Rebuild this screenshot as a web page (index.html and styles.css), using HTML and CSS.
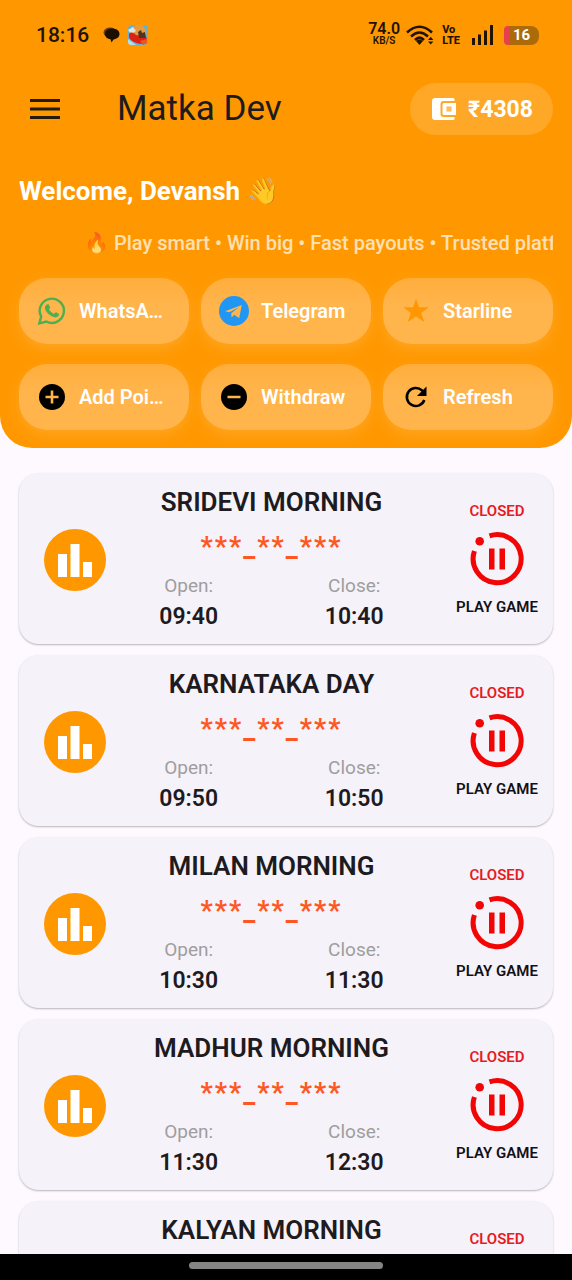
FILE: index.html
```html
<!DOCTYPE html>
<html lang="en">
<head>
<meta charset="utf-8">
<meta name="viewport" content="width=device-width, initial-scale=1">
<title>Matka Dev</title>
<link rel="stylesheet" href="styles.css">
</head>
<body>
<svg class="defs" aria-hidden="true">
  <symbol id="chart" viewBox="0 0 62 62"><path fill="#fff" d="M14 25h9v23h-9zM26.500 15h9v33h-9zM39 33h9v15h-9z"/></symbol>
  <symbol id="pause" viewBox="0 0 54 54"><path fill="none" stroke="#f20505" stroke-width="5" d="M19.500 3.900A24 24 0 1 1 4.400 19"/><circle cx="9.700" cy="9.300" r="4.300" fill="#f20505"/><path fill="#f20505" d="M19 16.500h5.500v21H19zM29.500 16.500H35v21h-5.500z"/></symbol>
</svg>
<div class="screen">
  <header class="header">
    <div class="status">
      <span class="clock">18:16</span>
      <svg class="ic-chat" viewBox="0 0 18 16" aria-hidden="true"><ellipse cx="7" cy="5.500" rx="6.500" ry="5" fill="#6b3c00"/><path d="M9 1.500c4.500 0 7.500 2.200 7.500 5.500 0 3-2.600 5-6 5.400L8.500 15.500 7.500 12.300C4.500 12 2 10 2 7c0-3.300 3-5.500 7-5.500z" fill="#1c0f00"/></svg>
      <svg class="ic-game" viewBox="0 0 20 20" aria-hidden="true"><rect width="20" height="20" rx="4" fill="#62b3cf"/><path d="M7 0h8l4 9-7 3-8-3z" fill="#e99a3c"/><path d="M0 5l5-3 3 4-5 3z" fill="#d9e8ea"/><path d="M1 9c2-3 5-1 7 1l10 2c2 2 0 6-4 7-5 0-12-3-13-7z" fill="#dc2214"/><path d="M10 7l3-2 1 3 3-1 1 6-7 0z" fill="#4d3524"/><path d="M12 16l7-2v4l-4 2z" fill="#f0551a"/><path d="M0 14l8 6H3q-3 0-3-3z" fill="#b8dce8"/></svg>
      <span class="spacer"></span>
      <span class="speed"><b>74.0</b><small>KB/S</small></span>
      <svg class="ic-wifi" viewBox="0 0 28 20" aria-hidden="true"><g fill="none" stroke="#211300" stroke-width="2.600"><path d="M1 7.500Q13.500-4 26 7.500"/><path d="M5 11.500Q13.500 3.500 22 11.500"/><path d="M9 15Q13.500 10.500 18 15"/></g><path fill="#211300" d="M10 16q3.500-3 7 0l-3.500 4zM22 15l2.700-3.300L27.400 15zM22 16.500h5.400l-2.700 3z"/></svg>
      <span class="volte"><b>Vo</b><b>LTE</b></span>
      <svg class="ic-signal" viewBox="0 0 22 20" aria-hidden="true"><path fill="#211300" d="M0 13h3v7H0zM6 9.500h3V20H6zM12 5.500h3V20h-3zM18 0h3v20h-3z"/></svg>
      <span class="battery">16</span>
    </div>
    <div class="appbar">
      <button class="menu" aria-label="Open menu"><svg viewBox="0 0 30 20" aria-hidden="true"><path stroke="#241a08" stroke-width="2.800" d="M0 1.500h30M0 10h30M0 18.500h30"/></svg></button>
      <h1 class="title">Matka Dev</h1>
      <button class="wallet"><svg viewBox="0 0 24 22" aria-hidden="true"><path fill="#fff" d="M3 0h18q1.500 0 1.500 1.500V3H11.500Q8.500 3 8.500 6v10q0 3 3 3h11v1.500Q22.500 22 21 22H3q-3 0-3-3V3Q0 0 3 0z"/><path fill="#fff" fill-rule="evenodd" d="M12 5h12v12H12q-1.500 0-1.500-1.500v-9Q10.500 5 12 5zm2.500 3.500v5h5v-5z"/><path fill="#fff" d="M14.500 8.500h5v5h-5z" opacity=".25"/></svg><span>₹4308</span></button>
    </div>
    <h2 class="welcome">Welcome, Devansh 👋</h2>
    <p class="ticker">🔥 Play smart • Win big • Fast payouts • Trusted platform</p>
    <nav class="actions">
      <button class="action"><svg viewBox="0 0 30 30" aria-hidden="true"><path fill="none" stroke="#4caf50" stroke-width="2.400" d="M2.300 27.300L4.200 20.600A12.100 12.100 0 1 1 9.200 25.500z"/><path fill="#4caf50" d="M11 8.300c.7 0 .9.300 1.100.8l1 2.300c.2.600-.8 1.400-1.200 1.900 1.300 2.300 2.800 3.600 5.200 4.700.6-.5 1.300-1.900 1.900-1.700l2.600 1.300c.6.400.3 1.800-.2 2.500-.9 1.100-2.700 1.600-4.200 1.200-4.200-1.200-6.800-3.800-8.700-7.200-1.300-2.500-.2-5.800 2.500-5.800z"/></svg><span>WhatsApp</span></button>
      <button class="action"><svg viewBox="0 0 30 30" aria-hidden="true"><circle cx="15" cy="15" r="15" fill="#2196f3"/><path fill="#ffb44c" d="M6 15.200L22.800 9l-2.600 13.300-5-3.500-2.600 2.600-.4-4.200 7.600-6-9.300 5z"/></svg><span>Telegram</span></button>
      <button class="action"><svg viewBox="0 0 30 30" aria-hidden="true"><path fill="#ff9800" d="M15 2.500l3 8.700h9.800l-7.600 5.700 3 9L15 20.500l-8.200 5.400 3-9-7.600-5.700H12z"/></svg><span>Starline</span></button>
      <button class="action"><svg viewBox="0 0 30 30" aria-hidden="true"><circle cx="15" cy="15" r="13"/><path stroke="#ffb44c" stroke-width="2.600" d="M8.500 15h13M15 8.500v13"/></svg><span>Add Points</span></button>
      <button class="action"><svg viewBox="0 0 30 30" aria-hidden="true"><circle cx="15" cy="15" r="13"/><path stroke="#ffb44c" stroke-width="2.600" d="M8.500 15h13"/></svg><span>Withdraw</span></button>
      <button class="action"><svg viewBox="0 0 30 30" aria-hidden="true"><path fill="none" stroke="#000" stroke-width="2.600" d="M23.300 18A9 9 0 1 1 21 8.400l2 2"/><path d="M25.500 4.500V14H16z"/></svg><span>Refresh</span></button>
    </nav>
  </header>
  <main class="games">
    <article class="card">
      <button class="chart" aria-label="Sridevi Morning chart"><svg aria-hidden="true"><use href="#chart"/></svg></button>
      <div class="info"><h3>SRIDEVI MORNING</h3><p class="result">***_**_***</p><dl><div><dt>Open:</dt><dd>09:40</dd></div><div><dt>Close:</dt><dd>10:40</dd></div></dl></div>
      <button class="play"><span class="closed">CLOSED</span><svg aria-hidden="true"><use href="#pause"/></svg><span>PLAY GAME</span></button>
    </article>
    <article class="card">
      <button class="chart" aria-label="Karnataka Day chart"><svg aria-hidden="true"><use href="#chart"/></svg></button>
      <div class="info"><h3>KARNATAKA DAY</h3><p class="result">***_**_***</p><dl><div><dt>Open:</dt><dd>09:50</dd></div><div><dt>Close:</dt><dd>10:50</dd></div></dl></div>
      <button class="play"><span class="closed">CLOSED</span><svg aria-hidden="true"><use href="#pause"/></svg><span>PLAY GAME</span></button>
    </article>
    <article class="card">
      <button class="chart" aria-label="Milan Morning chart"><svg aria-hidden="true"><use href="#chart"/></svg></button>
      <div class="info"><h3>MILAN MORNING</h3><p class="result">***_**_***</p><dl><div><dt>Open:</dt><dd>10:30</dd></div><div><dt>Close:</dt><dd>11:30</dd></div></dl></div>
      <button class="play"><span class="closed">CLOSED</span><svg aria-hidden="true"><use href="#pause"/></svg><span>PLAY GAME</span></button>
    </article>
    <article class="card">
      <button class="chart" aria-label="Madhur Morning chart"><svg aria-hidden="true"><use href="#chart"/></svg></button>
      <div class="info"><h3>MADHUR MORNING</h3><p class="result">***_**_***</p><dl><div><dt>Open:</dt><dd>11:30</dd></div><div><dt>Close:</dt><dd>12:30</dd></div></dl></div>
      <button class="play"><span class="closed">CLOSED</span><svg aria-hidden="true"><use href="#pause"/></svg><span>PLAY GAME</span></button>
    </article>
    <article class="card">
      <button class="chart" aria-label="Kalyan Morning chart"></button>
      <div class="info"><h3>KALYAN MORNING</h3></div>
      <button class="play"><span class="closed">CLOSED</span></button>
    </article>
  </main>
  <div class="navbar"><span class="handle"></span></div>
</div>
</body>
</html>
```

FILE: styles.css
```css
* { box-sizing: border-box; }
body, h1, h2, h3, p, dl, dd { margin: 0; }
body {
  background: #fef9ff;
  color: #1d1b20;
  font-family: Roboto, "Noto Sans", sans-serif;
}
button {
  padding: 0;
  border: 0;
  background: none;
  color: inherit;
  font: inherit;
  cursor: pointer;
}
svg { display: block; flex: none; }
.defs { position: absolute; width: 0; height: 0; }
.screen {
  display: flex;
  flex-direction: column;
  height: 100vh;
  overflow: hidden;
}

/* Header */
.header {
  flex: none;
  padding: 20px 19px 18px;
  border-radius: 0 0 32px 32px;
  background: #ff9800;
  overflow: hidden;
}
.status {
  display: flex;
  align-items: center;
  height: 30px;
  padding: 0 14px 0 17px;
  color: #211300;
}
.clock { margin-right: 14px; font-size: 21px; font-weight: 500; }
.ic-chat { width: 18px; height: 16px; margin-right: 7px; }
.ic-game { width: 20px; height: 20px; }
.spacer { flex: 1; }
.speed, .volte { display: flex; flex-direction: column; align-items: center; }
.speed { margin-right: 6px; }
.speed b { font-size: 16px; line-height: 12px; font-weight: 600; }
.speed small { font-size: 10px; line-height: 12px; font-weight: 600; }
.ic-wifi { width: 28px; height: 20px; margin-right: 8px; }
.volte { margin-right: 12px; align-items: flex-start; }
.volte b { font-size: 11px; line-height: 11px; font-weight: 800; }
.ic-signal { width: 22px; height: 20px; margin-right: 10px; }
.battery {
  width: 35px;
  border-radius: 4px 8px 8px 4px;
  background: linear-gradient(90deg, #e6404c 6px, #ad6a08 6px);
  color: #fff;
  font-size: 15px;
  line-height: 19px;
  font-weight: 700;
  text-align: center;
}
.appbar { display: flex; align-items: center; height: 52px; margin-top: 33px; }
.menu { padding: 11px; margin-right: 46px; }
.menu svg { width: 30px; height: 20px; }
.title { flex: 1; font-size: 35px; font-weight: 400; line-height: 44px; }
.wallet {
  display: flex;
  align-items: center;
  gap: 12px;
  height: 52px;
  padding: 0 20px 0 22px;
  border-radius: 26px;
  background: #ffa726;
  color: #fff;
  font-size: 23px;
  font-weight: 700;
}
.wallet svg { width: 24px; height: 22px; }
.welcome { margin-top: 40px; color: #fff; font-size: 26px; line-height: 32px; font-weight: 700; }
.ticker {
  margin-top: 24px;
  padding-left: 65px;
  overflow: hidden;
  color: #fff;
  opacity: .7;
  font-size: 20px;
  line-height: 24px;
  font-weight: 500;
  white-space: nowrap;
}
.actions {
  display: grid;
  grid-template-columns: repeat(3, minmax(0, 1fr));
  gap: 20px 12px;
  margin-top: 23px;
}
.action {
  display: flex;
  align-items: center;
  gap: 12px;
  height: 66px;
  padding: 0 18px;
  border-radius: 28px;
  background: linear-gradient(#ffae3c, #ffb44c 40%);
  box-shadow: 0 5px 14px rgba(255, 255, 255, .13);
  color: #fff;
  font-size: 20px;
  font-weight: 600;
  text-align: left;
}
.action svg { width: 30px; height: 30px; }
.action span { min-width: 0; overflow: hidden; text-overflow: ellipsis; white-space: nowrap; }

/* Game list */
.games {
  display: flex;
  flex: 1;
  flex-direction: column;
  gap: 11px;
  min-height: 0;
  padding: 25px 19px 0;
  overflow: hidden;
}
.card {
  display: grid;
  flex: none;
  grid-template-columns: 62px minmax(0, 1fr) auto;
  min-height: 171px;
  padding: 12px 13px 10px 25px;
  border-radius: 20px;
  background: #f6f2f9;
  box-shadow: 0 1px 2px rgba(0, 0, 0, .28);
}
.chart {
  align-self: center;
  width: 62px;
  height: 62px;
  border-radius: 50%;
  background: #ff9800;
}
.chart svg { width: 62px; height: 62px; }
.info { text-align: center; }
.info h3 { font-size: 26px; line-height: 35px; font-weight: 600; }
.result {
  margin-top: 11px;
  color: #ff5722;
  font-size: 27px;
  line-height: 32px;
  font-weight: 700;
  letter-spacing: 2px;
}
.info dl { display: grid; grid-template-columns: 1fr 1fr; }
.info dt { margin-top: 9px; color: #9e9e9e; font-size: 19px; line-height: 28px; }
.info dd { font-size: 23px; line-height: 34px; font-weight: 600; }
.play {
  display: flex;
  flex-direction: column;
  align-items: center;
  align-self: start;
  min-width: 86px;
  margin-left: 17px;
  padding-top: 16px;
  color: #111;
  font-size: 15px;
  line-height: 20px;
  font-weight: 600;
}
.play svg { width: 54px; height: 54px; margin: 11px 0; }
.closed { color: #e51c23; }

/* System navigation */
.navbar {
  display: flex;
  flex: none;
  align-items: center;
  justify-content: center;
  height: 26px;
  padding-bottom: 4px;
  background: #000;
}
.handle { width: 34%; height: 7px; border-radius: 4px; background: #858585; }
```
